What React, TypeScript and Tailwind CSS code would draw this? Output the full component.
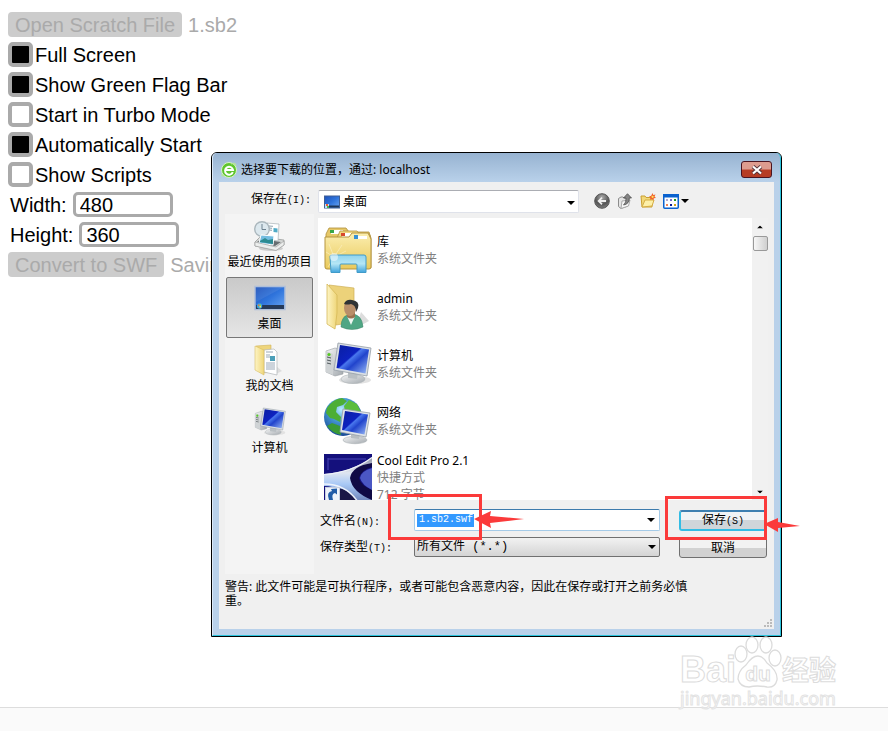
import React, { useState } from "react";

const SANS = "font-['Liberation_Sans',Arial,sans-serif]";
const UI = "font-['Noto_Sans','Noto_Sans_CJK_SC',sans-serif]";

type IconProps = { className?: string };

function Defs() {
  return (
    <svg width="0" height="0" className="absolute" aria-hidden="true">
      <defs>
        <linearGradient id="screen" x1="0" y1="0" x2="1" y2="1">
          <stop offset="0" stopColor="#0a1fa0" />
          <stop offset="0.42" stopColor="#0d22c0" />
          <stop offset="0.46" stopColor="#4a78ee" />
          <stop offset="0.6" stopColor="#2144cc" />
          <stop offset="1" stopColor="#9fc0f8" />
        </linearGradient>
        <linearGradient id="desk" x1="0" y1="0" x2="1" y2="1">
          <stop offset="0" stopColor="#1c4fb8" />
          <stop offset="0.5" stopColor="#2f74dc" />
          <stop offset="1" stopColor="#6ba6f2" />
        </linearGradient>
        <linearGradient id="folder" x1="0" y1="0" x2="0" y2="1">
          <stop offset="0" stopColor="#fbeeb0" />
          <stop offset="1" stopColor="#e9c95a" />
        </linearGradient>
        <linearGradient id="flap" x1="0" y1="0" x2="1" y2="0">
          <stop offset="0" stopColor="#fdf4c4" />
          <stop offset="1" stopColor="#efd679" />
        </linearGradient>
        <linearGradient id="glass" x1="0" y1="0" x2="0" y2="1">
          <stop offset="0" stopColor="#8fd3ee" />
          <stop offset="0.5" stopColor="#b5e6f5" />
          <stop offset="1" stopColor="#3fa3dc" />
        </linearGradient>
        <linearGradient id="metal" x1="0" y1="0" x2="1" y2="1">
          <stop offset="0" stopColor="#f4f5f6" />
          <stop offset="1" stopColor="#a3a9ae" />
        </linearGradient>
        <radialGradient id="globe" cx="0.45" cy="0.3" r="0.75">
          <stop offset="0" stopColor="#b8ecff" />
          <stop offset="0.4" stopColor="#479bd6" />
          <stop offset="1" stopColor="#123f8e" />
        </radialGradient>
        <radialGradient id="backball" cx="0.5" cy="0.25" r="0.8">
          <stop offset="0" stopColor="#aaa" />
          <stop offset="0.6" stopColor="#555" />
          <stop offset="1" stopColor="#888" />
        </radialGradient>
        <linearGradient id="swoosh" x1="0" y1="0" x2="0" y2="1">
          <stop offset="0" stopColor="#8b90a4" />
          <stop offset="0.35" stopColor="#dfe5f0" />
          <stop offset="0.6" stopColor="#a9c9f6" />
          <stop offset="1" stopColor="#6a80b8" />
        </linearGradient>
      </defs>
    </svg>
  );
}

function BrowserIcon() {
  return (
    <svg viewBox="0 0 16 16" className="size-4" aria-hidden="true">
      <circle cx="8" cy="8" r="7.5" fill="#5fc52e" stroke="#d7f3c4" />
      <path d="M11.8 10.2A4 4 0 1 1 12 8H5" fill="none" stroke="#fff" strokeWidth="2" />
      <path d="M1 12Q.5 14.5 4 13.5M10 1.8Q15 .2 14.8 4" fill="none" stroke="#b6e695" strokeWidth="1.3" />
    </svg>
  );
}

function MiniDesktop() {
  return (
    <svg viewBox="0 0 16 14" className="h-[14px] w-4" aria-hidden="true">
      <rect x=".5" y="1" width="15" height="12" fill="url(#desk)" stroke="#3f5f95" />
      <rect x="1" y="10.5" width="14" height="2" fill="#1c3458" />
      <path d="M1 9h4v4H1z" fill="#b9e2f8" />
      <path d="M2 9h2v2H2z" fill="#ee5b34" />
      <path d="M3 11h2v2H3z" fill="#4ab14a" />
    </svg>
  );
}

function BackIcon() {
  return (
    <svg viewBox="0 0 16 16" className="size-4" aria-hidden="true">
      <circle cx="8" cy="8" r="7.3" fill="url(#backball)" stroke="#555" />
      <path d="M12 8H5M8 4.7 4.7 8 8 11.3" fill="none" stroke="#eee" strokeWidth="1.8" />
    </svg>
  );
}

function UpIcon() {
  return (
    <svg viewBox="0 0 16 16" className="size-4" aria-hidden="true">
      <path d="M1.500 5.500 4 4h2l1 1h4v8l-7 2.500-2.500-2z" fill="#e4e4e4" stroke="#8c8c8c" />
      <path d="M4 15.500 5 8l8-1-1.500 6z" fill="#f7f7f7" stroke="#aaa" />
      <path d="M6.500 12Q12.500 11 12.300 5H14.500L10.500 .7 6.500 5h2.500Q9.500 9.500 6.500 12Z" fill="#858585" stroke="#444" strokeWidth=".7" />
    </svg>
  );
}

function NewFolderIcon() {
  return (
    <svg viewBox="0 0 16 16" className="size-4" aria-hidden="true">
      <path d="M1 3h4l1 1.500h6V14H2z" fill="#f2d878" stroke="#c99f32" />
      <path d="M2 14 5 7h9l-2 6z" fill="#fdf0a9" stroke="#d5ad43" />
      <path d="m12.500 0 .8 2 2.200-.4-1 1.900 1.500 1.500-2.200.3-.4 2.200-1.500-1.600-2 .9.500-2.200L9 3.400l2.200-.6z" fill="#f0642d" />
      <circle cx="12.600" cy="3.800" r="1.100" fill="#ffe45c" />
    </svg>
  );
}

function ViewIcon() {
  return (
    <svg viewBox="0 0 16 15" className="h-[15px] w-4" aria-hidden="true">
      <rect x=".75" y=".75" width="14.500" height="13.500" rx="1" fill="#fff" stroke="#0a62cf" strokeWidth="1.500" />
      <path d="M0 0h16v3.500H0z" fill="#0a62cf" />
      <path d="M3 5h2v2H3z" fill="#b0a9d4" />
      <path d="M7 5h2v2H7z" fill="#7b6eca" />
      <path d="M11 5h2v2h-2z" fill="#159a20" />
      <path d="M3 10h2v2H3z" fill="#ef8358" />
      <path d="M7 10h2v2H7z" fill="#0b1f97" />
      <path d="M11 10h2v2h-2z" fill="#d6a515" />
    </svg>
  );
}

function Caret({ className = "" }: IconProps) {
  return (
    <svg viewBox="0 0 8 4" className={`h-1 w-2 ${className}`} aria-hidden="true">
      <path d="M0 0h8L4 4z" fill="#000" />
    </svg>
  );
}

function RecentIcon() {
  return (
    <svg viewBox="0 0 32 32" className="size-8" aria-hidden="true">
      <ellipse cx="17" cy="28.500" rx="12" ry="2.500" fill="#ccc" />
      <path d="m1 22 5-5 24 3v5l-8 5L1 26z" fill="#d5d7d6" stroke="#909392" strokeWidth=".7" />
      <path d="m3 22 4-3 20 3-6 4z" fill="#676d70" />
      <path d="M13 3 25 4l-1 17-12-2z" fill="#fff" stroke="#a9b3b8" strokeWidth=".7" />
      <path d="m15 6 4 .3M15 8l3 .3M15 10l3 .3" stroke="#8fa3b0" />
      <path d="m19.500 8 4 .5v4l-4-.5z" fill="#4faac6" />
      <circle cx="8" cy="9" r="7.300" fill="#dce8ee" stroke="#abb7bd" strokeWidth="1.400" />
      <path d="M8 4v5.500h4" fill="none" stroke="#6e8290" />
      <path d="m7 15 13 1-1 9-14-2z" fill="#73bde1" stroke="#fff" />
      <path d="m6 21 5-3 3 2 5-1v5l-13-2z" fill="#2c8b91" />
      <path d="m1 22 21 5 8-6v4l-8 5.500L1 26z" fill="#eceeed" stroke="#999" strokeWidth=".6" />
    </svg>
  );
}

function DesktopIcon() {
  return (
    <svg viewBox="0 0 32 32" className="size-8" aria-hidden="true">
      <rect x="1" y="4.500" width="30" height="23" fill="url(#desk)" stroke="#aebfda" strokeWidth="1.500" />
      <path d="M2 5h28L2 20z" fill="#fff" opacity=".08" />
      <path d="M2 23h28v4H2z" fill="#263a5a" />
      <circle cx="5.500" cy="24" r="2.700" fill="#41a4d8" />
      <path d="M4 22.500h1.500V24H4z" fill="#ef7041" />
      <path d="M5.500 22.500H7V24H5.500z" fill="#8bd34b" />
      <path d="M5.500 24H7v1.500H5.500z" fill="#ffe05a" />
    </svg>
  );
}

function DocumentsIcon() {
  return (
    <svg viewBox="0 0 32 32" className="size-8" aria-hidden="true">
      <path d="M22 30 28 27l-6-5z" fill="#ddd" />
      <path d="M2 2 17 1v27l-8 1z" fill="#eed57c" stroke="#d1b357" strokeWidth=".6" />
      <path d="m10 6 10-1 3 3v23l-13-3z" fill="#fff" stroke="#b0b4b8" strokeWidth=".7" />
      <path d="M12 8h7M12 11h4M12 13h4M12 19h9M12 21h9M12 23h9M12 25h9" stroke="#9ba9b8" />
      <path d="M16 12h5v5h-5z" fill="#4c9fb8" />
      <path d="m1 2 9 4v25L1 26z" fill="url(#flap)" stroke="#d8bd62" strokeWidth=".6" />
    </svg>
  );
}

function ComputerIcon({ className = "size-12" }: IconProps) {
  return (
    <svg viewBox="0 0 48 48" className={className} aria-hidden="true">
      <ellipse cx="31" cy="40" rx="16" ry="4" fill="#e2e2e2" />
      <path d="m2 11 9-3 8 2v24l-8 2-9-4z" fill="url(#metal)" stroke="#989ea3" strokeWidth=".6" />
      <path d="m2 11 7 3v21l-7-3z" fill="#cfd3d5" />
      <path d="m3 17 4 1M3 20l4 1M3 23l4 1" stroke="#535b5f" />
      <circle cx="5" cy="14.500" r="1.600" fill="#54c920" />
      <ellipse cx="29" cy="39" rx="12" ry="4.500" fill="url(#metal)" stroke="#adb3b7" strokeWidth=".6" />
      <path d="m24 32 10 1-1 6-9-1z" fill="#b9bfc3" />
      <path d="m14 3 33 5-4 28-33-6z" fill="#dbe0e4" stroke="#969ea7" strokeWidth=".8" />
      <path d="m16 5 29 4.500-3.500 24L12.500 28z" fill="url(#screen)" />
    </svg>
  );
}

function LibraryIcon() {
  return (
    <svg viewBox="0 0 48 48" className="size-12" aria-hidden="true">
      <path d="M2 8 5 2h17l3 4h20l2 6v30H2z" fill="#e6c868" stroke="#af8e38" strokeWidth=".8" />
      <path d="M7 4h12v4H7z" fill="#fff" />
      <path d="M6 4h4v3H6z" fill="#39a647" />
      <path d="m13 12 3-7h17l3 4h10v32H13z" fill="#f0d780" stroke="#b4933d" strokeWidth=".8" />
      <path d="M18 7h12v4H18z" fill="#fff" />
      <path d="M17 7h4v3h-4z" fill="#d8482b" />
      <path d="M1 11h24l3-4h16l3 6v28q0 2-2 2H3q-2 0-2-2z" fill="url(#folder)" stroke="#b59540" />
      <path d="M31 10h12v3H31z" fill="#fff" />
      <path d="M30 9h4v4h-4z" fill="#3891d3" />
      <path d="m10 31 8-12M10 31l12-6M10 31 5 18M10 31l-8-5M10 31l-6 10" stroke="#fff8d6" strokeWidth=".6" opacity=".8" />
      <path d="M6 30.500Q6 29 8 29h32q2 0 2 2v15.500h-9V39q0-1-1-1H17q-1 0-1 1v7.500H7z" fill="url(#glass)" stroke="#409bc9" />
      <circle cx="10" cy="31" r="4" fill="#fff" opacity=".5" />
    </svg>
  );
}

function AdminIcon() {
  return (
    <svg viewBox="0 0 48 48" className="size-12" aria-hidden="true">
      <path d="m32 45 13-7-8-9z" fill="#ddd" />
      <path d="M5 2 30 5v34l-18 3z" fill="#ecd27a" stroke="#ceb057" strokeWidth=".7" />
      <path d="m3 1 10 11v18l-2 16-8-5z" fill="url(#flap)" stroke="#d6b958" strokeWidth=".8" />
      <path d="M17 44q0-12 10-13 11 0 12 13-11 5-22 0z" fill="#4fa684" stroke="#3a8267" strokeWidth=".5" />
      <path d="m23 33 4 9 4-9z" fill="#eef6f2" />
      <path d="M23 27h8v7q-4 3-8 0z" fill="#9b7350" />
      <ellipse cx="26" cy="25" rx="6" ry="8" fill="#b98f6a" />
      <path d="M20 21q2-5 8-4 8 1 6 8l-2 4q0-7-5-8-4 1-7 0z" fill="#2f3234" />
    </svg>
  );
}

function NetworkIcon() {
  return (
    <svg viewBox="0 0 48 48" className="size-12" aria-hidden="true">
      <circle cx="19" cy="20" r="19" fill="url(#globe)" />
      <path d="M3 11Q9 2 18 1l5 3-4 4-6 2-1 5 5 5-1 5-6-3-4-1-4-5z" fill="#4cae35" />
      <path d="m25 3 8 4 4 8-6 2-7-4-3 2-1-6z" fill="#5abd3c" />
      <path d="m8 26 8 3 1 9Q8 36 3 29z" fill="#3b9a35" />
      <ellipse cx="31" cy="43" rx="12" ry="3.700" fill="url(#metal)" stroke="#aab0b4" strokeWidth=".6" />
      <path d="m27 36 9 1-1 5-8-1z" fill="#b8bec2" />
      <path d="m19 12 27 4-4 24-26-5z" fill="#dfe4e8" stroke="#979fa8" strokeWidth=".8" />
      <path d="m21 14 23 3.500-3.500 20L18 33z" fill="url(#screen)" />
    </svg>
  );
}

function CoolEditIcon() {
  return (
    <svg viewBox="0 0 48 48" className="size-12" aria-hidden="true">
      <path d="M0 0h48v48H0z" fill="#14107c" />
      <path d="M4 5h38M4 4v12" stroke="#4947b8" />
      <path d="M0 20Q28 18 48 3v9Q31 13 29 25q2 12 19 18v5H32Q18 32 0 32z" fill="url(#swoosh)" />
      <path d="M0 20.500Q28 18.500 48 3.500" fill="none" stroke="#eef1f8" strokeWidth="1.200" />
      <path d="M48 9Q28 12 26 24q2 14 22 22V36q-12-5-13-12 2-8 13-11z" fill="#100a45" />
      <path d="M48 14q-11 3-12 10 2 7 12 12z" fill="#4b57c4" />
      <path d="M14 34q14 2 20 14H15z" fill="#191647" />
      <path d="M0 30q22 0 34 18" fill="none" stroke="#eef3fc" strokeWidth="1.500" />
      <rect x="1.500" y="33.500" width="14" height="14" fill="#eef3fb" stroke="#c7cfdf" />
      <path d="M5 46q-3-8 3-9l-1-2 6-.5v6l-2-1.500q-4 1-2 7z" fill="#205ca8" />
    </svg>
  );
}

const options = [
  { label: "Full Screen", on: true },
  { label: "Show Green Flag Bar", on: true },
  { label: "Start in Turbo Mode", on: false },
  { label: "Automatically Start", on: true },
  { label: "Show Scripts", on: false },
];

function ConverterForm() {
  return (
    <form className="flex flex-col items-start gap-[5px] whitespace-nowrap px-2 pt-3 text-xl leading-[27px]" onSubmit={(e) => e.preventDefault()}>
      <div className="flex h-[25px] gap-1.5 text-[#aaa]">
        <button type="button" disabled className="h-[25px] rounded bg-[#ccc] px-[7px]">Open Scratch File</button>
        <span>1.sb2</span>
      </div>
      {options.map((o) => (
        <label key={o.label} className="flex h-[25px] gap-0.5">
          <input type="checkbox" defaultChecked={o.on} className="size-[25px] appearance-none rounded-[5px] border-4 border-[#aaa] bg-white checked:bg-black" />
          <span>{o.label}</span>
        </label>
      ))}
      <div className="flex h-[25px] gap-1.5 pl-0.5">
        <label htmlFor="width">Width:</label>
        <input id="width" defaultValue="480" className="h-[25px] w-[100px] rounded-[5px] border-[3px] border-[#aaa] bg-white px-1 pt-0.5" />
      </div>
      <div className="flex h-[25px] gap-1.5 pl-0.5">
        <label htmlFor="height">Height:</label>
        <input id="height" defaultValue="360" className="h-[25px] w-[100px] rounded-[5px] border-[3px] border-[#aaa] bg-white px-1 pt-0.5" />
      </div>
      <div className="flex h-[25px] gap-1.5 text-[#aaa]">
        <button type="button" disabled className="h-[25px] rounded bg-[#ccc] px-[7px]">Convert to SWF</button>
        <span>Saving</span>
      </div>
    </form>
  );
}

/* Half-width characters of the dialog font, six pixels each. */
function Half({ children }: { children: React.ReactNode }) {
  return <span className="font-['Liberation_Mono',monospace] text-[10px]">{children}</span>;
}

const places = [
  { label: "最近使用的项目", icon: <RecentIcon /> },
  { label: "桌面", icon: <DesktopIcon /> },
  { label: "我的文档", icon: <DocumentsIcon /> },
  { label: "计算机", icon: <ComputerIcon className="size-8" /> },
];

const files = [
  { name: "库", info: ["系统文件夹"], icon: <LibraryIcon /> },
  { name: "admin", info: ["系统文件夹"], icon: <AdminIcon /> },
  { name: "计算机", info: ["系统文件夹"], icon: <ComputerIcon /> },
  { name: "网络", info: ["系统文件夹"], icon: <NetworkIcon /> },
  { name: "Cool Edit Pro 2.1", info: ["快捷方式", "712 字节"], icon: <CoolEditIcon /> },
];

function Places() {
  const [current, setCurrent] = useState("桌面");
  return (
    <nav className="flex w-[89px] shrink-0 flex-col gap-px bg-[#f4f4f4] px-px pt-px">
      {places.map((p) => (
        <button
          key={p.label}
          type="button"
          onClick={() => setCurrent(p.label)}
          className={
            p.label === current
              ? "flex h-[61px] flex-col items-center gap-0.5 whitespace-nowrap rounded-xs border border-[#777] bg-linear-to-b from-[#c9c9c9] to-[#e6e6e6] pt-1 leading-4"
              : "flex h-[61px] flex-col items-center gap-0.5 whitespace-nowrap border border-transparent pt-1 leading-4"
          }
        >
          {p.icon}
          <span>{p.label}</span>
        </button>
      ))}
    </nav>
  );
}

function FileList() {
  return (
    <div className="mr-1.5 flex h-[282px] overflow-hidden bg-white">
      <ul className="flex-1 pl-1.5 pt-[3px]">
        {files.map((f) => (
          <li key={f.name} className="flex h-[57px] items-center gap-[5px] leading-[17px]">
            {f.icon}
            <div>
              <p>{f.name}</p>
              {f.info.map((line) => (
                <p key={line} className="text-[#808080]">{line}</p>
              ))}
            </div>
          </li>
        ))}
      </ul>
      <div className="flex w-4 flex-col items-center bg-[#f1f1f1] pb-1.5 pt-[7px]" aria-hidden="true">
        <Caret className="mb-[7px] rotate-180 scale-75" />
        <div className="h-[15px] w-[15px] rounded-xs border border-[#999] bg-linear-to-r from-[#f7f7f7] to-[#cfcfcf]" />
        <Caret className="mt-auto scale-75" />
      </div>
    </div>
  );
}

function SaveFields() {
  return (
    <div className="grid grid-cols-[94px_1fr_88px] grid-rows-[22px_21px] gap-y-1.5 pl-0.5 pr-[7px] pt-[9px]">
      <label htmlFor="file-name" className="leading-6">文件名<Half>(N):</Half></label>
      <div className="mr-[19px] flex h-[22px] items-center rounded-xs border border-[#a5cbe8] border-t-[#3d7bad] bg-white pl-0.5 pr-1">
        <input
          id="file-name"
          defaultValue="1.sb2.swf"
          className="h-[13px] w-[57px] bg-[#3399ff] pl-0.5 font-['Liberation_Mono',monospace] text-[10px] text-white outline-none"
        />
        <button type="button" aria-label="Recent names" className="ml-auto"><Caret /></button>
      </div>
      <button type="button" className="mt-px h-[21px] rounded-[3px] border-2 border-[#33bce4] border-t-[#3c7fb1] bg-linear-to-b from-[#eff3f6] from-50% to-[#cfd5da] to-50% leading-4">
        保存<Half>(S)</Half>
      </button>
      <label htmlFor="file-type" className="leading-5">保存类型<Half>(T):</Half></label>
      <div className="relative mr-[19px]">
        <select id="file-type" className="h-5 w-full appearance-none rounded-xs border border-[#707070] bg-linear-to-b from-[#f2f2f2] to-[#d4d4d4] px-0.5 font-['Liberation_Mono','Noto_Sans_CJK_SC',monospace] leading-4">
          <option>所有文件 (*.*)</option>
        </select>
        <Caret className="pointer-events-none absolute right-1 top-2" />
      </div>
      <button type="button" className="h-[21px] rounded-[3px] border border-[#707070] bg-linear-to-b from-[#f2f2f2] from-50% to-[#d2d2d2] to-50% leading-4">
        取消
      </button>
    </div>
  );
}

function SaveDialog() {
  return (
    <section
      role="dialog"
      aria-label="选择要下载的位置"
      className={`absolute left-[211px] top-[152px] w-[571px] rounded-t-md border border-black bg-[#b9d1ea] text-xs text-black ${UI}`}
    >
      <div className="rounded-t-[5px] border-b border-l border-r border-b-[#2bc4dd] border-l-[#dceaf8] border-r-[#2bc4dd] bg-linear-to-b from-[#97b3d1] to-[#b9d1ea] to-[29px] px-1.5 pb-1.5">
        <header className="flex h-[29px] items-center gap-1 pl-0.5 pt-1">
          <BrowserIcon />
          <h1 className="whitespace-nowrap">选择要下载的位置，通过: localhost</h1>
          <button type="button" aria-label="Close" className="ml-auto mr-0.5 flex h-[17px] w-[31px] items-center justify-center rounded-[3px] border border-[#4a1420] bg-linear-to-b from-[#dd9c8f] from-45% to-[#b63c25] to-55%">
            <svg viewBox="0 0 12 10" className="h-2.5 w-3" aria-hidden="true">
              <path d="m2 1.500 8 7M10 1.500l-8 7" stroke="#56343a" strokeWidth="4" />
              <path d="m2 1.500 8 7M10 1.500l-8 7" stroke="#fff" strokeWidth="2.200" />
            </svg>
          </button>
        </header>
        <div className="relative h-[447px] bg-[#f0f0f0]">
          <div className="flex h-8 items-start pt-2">
            <label htmlFor="folder" className="w-[99px] whitespace-nowrap pl-8 leading-[18px]">保存在<Half>(I):</Half></label>
            <div className="relative w-[261px]">
              <span className="absolute left-1.5 top-[5px]"><MiniDesktop /></span>
              <select id="folder" className="h-[23px] w-full appearance-none rounded-xs border border-[#dfe2ea] border-t-[#abadb3] bg-white pl-6 leading-4">
                <option>桌面</option>
              </select>
              <Caret className="pointer-events-none absolute right-1 top-[11px]" />
            </div>
            <div className="ml-[15px] flex items-center gap-[7px] pt-[3px]">
              <button type="button" aria-label="Back"><BackIcon /></button>
              <button type="button" aria-label="Up"><UpIcon /></button>
              <button type="button" aria-label="New folder"><NewFolderIcon /></button>
              <button type="button" aria-label="View" className="flex items-center gap-0.5"><ViewIcon /><Caret /></button>
            </div>
          </div>
          <div className="flex h-[360px] gap-1 pl-1.5">
            <Places />
            <div className="min-w-0 flex-1 pt-1">
              <FileList />
              <SaveFields />
            </div>
          </div>
          <p className="w-[480px] pl-1.5 pt-1.5 leading-[14px]">
            警告: 此文件可能是可执行程序，或者可能包含恶意内容，因此在保存或打开之前务必慎重。
          </p>
          <svg viewBox="0 0 9 9" className="absolute bottom-0.5 right-0.5 size-[9px]" aria-hidden="true">
            <path d="M7 1h2v2H7zM7 4h2v2H7zM7 7h2v2H7zM4 4h2v2H4zM4 7h2v2H4zM1 7h2v2H1z" fill="#bbb" />
          </svg>
        </div>
      </div>
    </section>
  );
}

function Highlights() {
  return (
    <div className="pointer-events-none" aria-hidden="true">
      <div className="absolute left-[388px] top-[494px] h-[46px] w-[94px] border-3 border-[#fb3a3a]" />
      <div className="absolute left-[665px] top-[496px] h-[44px] w-[102px] border-3 border-[#fb3a3a]" />
      <svg viewBox="0 0 50 18" className="absolute left-[474px] top-[511px] h-[18px] w-[50px]">
        <path d="M0 8 17 0 16 5 50 8 16 12l1 5z" fill="#fb3a3a" />
      </svg>
      <svg viewBox="0 0 36 14" className="absolute left-[764px] top-[518px] h-[14px] w-[36px]">
        <path d="M0 6 14 0v4l22 4-22 2v4z" fill="#fb3a3a" />
      </svg>
    </div>
  );
}

function Watermark() {
  return (
    <div className="pointer-events-none absolute left-[680px] top-[636px] w-40 whitespace-nowrap text-white" aria-hidden="true">
      <div className="flex h-[52px] items-end">
        <span className="w-[54px] font-['Liberation_Sans',sans-serif] text-4xl font-bold leading-[36px] [-webkit-text-stroke:1px_#dcdcdc]">Bai</span>
        <svg viewBox="0 0 48 52" className="h-[52px] w-12">
          <g fill="#fff" stroke="#dcdcdc" strokeWidth="1.300">
            <ellipse cx="7" cy="18" rx="6" ry="8" />
            <ellipse cx="18" cy="9" rx="6" ry="8" />
            <ellipse cx="32" cy="9" rx="6" ry="8" />
            <ellipse cx="41" cy="22" rx="6" ry="8" />
            <path d="M24 20q5 0 9 7 11 8 10 17-2 8-10 7-10-2-18 0-9 0-11-8 0-8 8-14 6-9 12-9z" />
          </g>
          <text x="24" y="45" textAnchor="middle" fontFamily="Liberation Sans" fontSize="21" fontWeight="bold" fill="#fff" stroke="#dcdcdc">du</text>
        </svg>
        <span className="font-['Noto_Sans_CJK_SC',sans-serif] text-[27px] font-bold leading-[38px] [-webkit-text-stroke:1px_#dcdcdc]">经验</span>
      </div>
      <p className="font-['Noto_Sans',sans-serif] text-lg leading-5 [-webkit-text-stroke:1px_#e3e3e3]">jingyan.baidu.com</p>
    </div>
  );
}

export default function App() {
  return (
    <div className={`relative flex min-h-screen flex-col overflow-hidden bg-white text-black ${SANS}`}>
      <Defs />
      <main className="flex-1">
        <ConverterForm />
        <SaveDialog />
        <Highlights />
      </main>
      <footer className="h-6 border-t border-[#ddd] bg-[#fafafa]" />
      <Watermark />
    </div>
  );
}
